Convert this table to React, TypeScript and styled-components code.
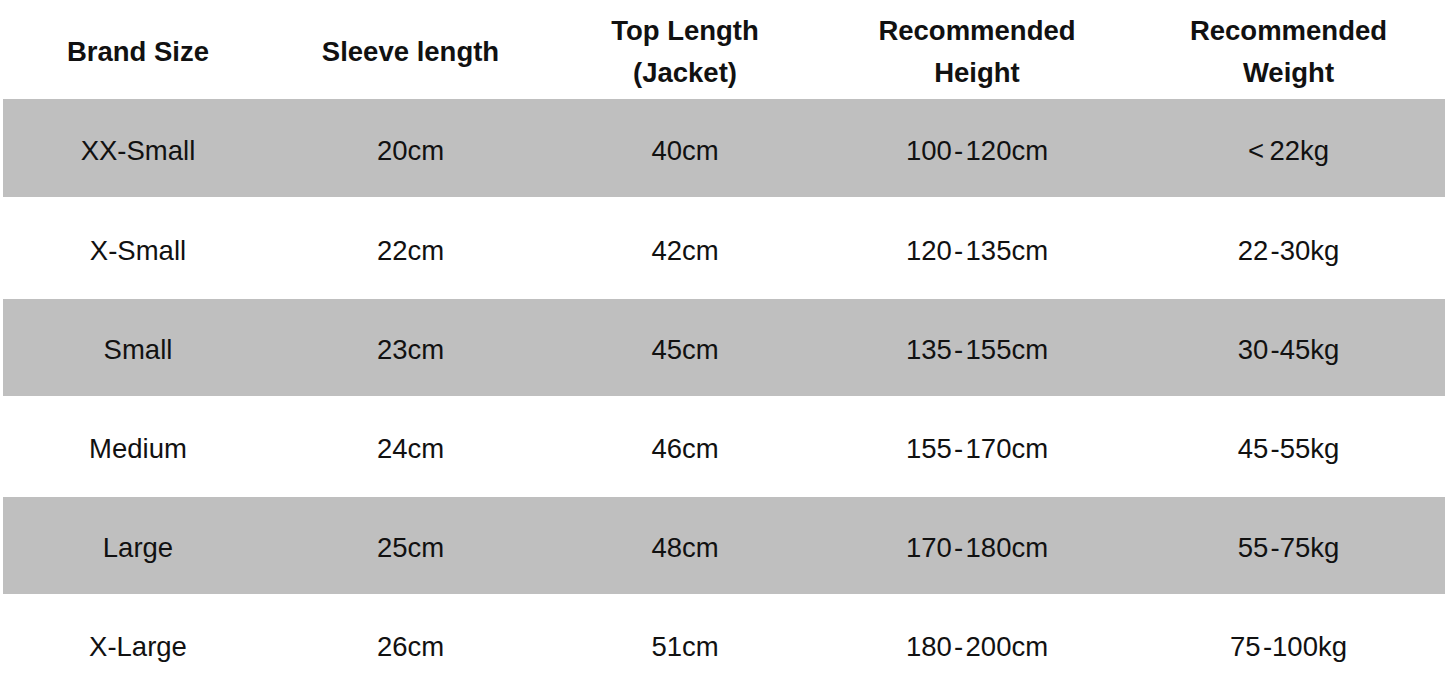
import styled, { createGlobalStyle } from "styled-components";

const GlobalStyle = createGlobalStyle`
  html, body {
    margin: 0;
    padding: 0;
    background: #ffffff;
  }
  body {
    font-family: "Liberation Sans", Arial, Helvetica, sans-serif;
    color: #111111;
  }
`;

const Table = styled.div`
  width: 1445px;
  height: 695px;
  padding-left: 3px;
  box-sizing: border-box;
  display: grid;
  grid-template-rows: 99px 98px 102px 97px 101px 97px 101px;
`;

const Row = styled.div<{ $shaded?: boolean }>`
  display: grid;
  grid-template-columns: 270px 275px 274px 310px 313px;
  background-color: ${(p) => (p.$shaded ? "#bfbfbf" : "transparent")};
`;

const HeadCell = styled.div`
  display: flex;
  align-items: center;
  justify-content: center;
  text-align: center;
  font-size: 27.5px;
  font-weight: bold;
  line-height: 42px;
  padding-top: 4px;
`;

const Cell = styled.div`
  display: flex;
  align-items: center;
  justify-content: center;
  font-size: 27.5px;
  padding-top: 5px;
`;

const headers = [
  ["Brand Size"],
  ["Sleeve length"],
  ["Top Length", "(Jacket)"],
  ["Recommended", "Height"],
  ["Recommended", "Weight"],
];

const hs = "\u200A";

const rows = [
  ["XX-Small", "20cm", "40cm", `100${hs}-${hs}120cm`, "<\u200922kg"],
  ["X-Small", "22cm", "42cm", `120${hs}-${hs}135cm`, `22${hs}-30kg`],
  ["Small", "23cm", "45cm", `135${hs}-${hs}155cm`, `30${hs}-45kg`],
  ["Medium", "24cm", "46cm", `155${hs}-${hs}170cm`, `45${hs}-55kg`],
  ["Large", "25cm", "48cm", `170${hs}-${hs}180cm`, `55${hs}-75kg`],
  ["X-Large", "26cm", "51cm", `180${hs}-${hs}200cm`, `75${hs}-100kg`],
];

export default function App() {
  return (
    <>
      <GlobalStyle />
      <Table>
        <Row>
          {headers.map((lines, i) => (
            <HeadCell key={i}>
              <div>
                {lines.map((l, j) => (
                  <div key={j}>{l}</div>
                ))}
              </div>
            </HeadCell>
          ))}
        </Row>
        {rows.map((r, i) => (
          <Row key={i} $shaded={i % 2 === 0}>
            {r.map((c, j) => (
              <Cell key={j}>{c}</Cell>
            ))}
          </Row>
        ))}
      </Table>
    </>
  );
}
